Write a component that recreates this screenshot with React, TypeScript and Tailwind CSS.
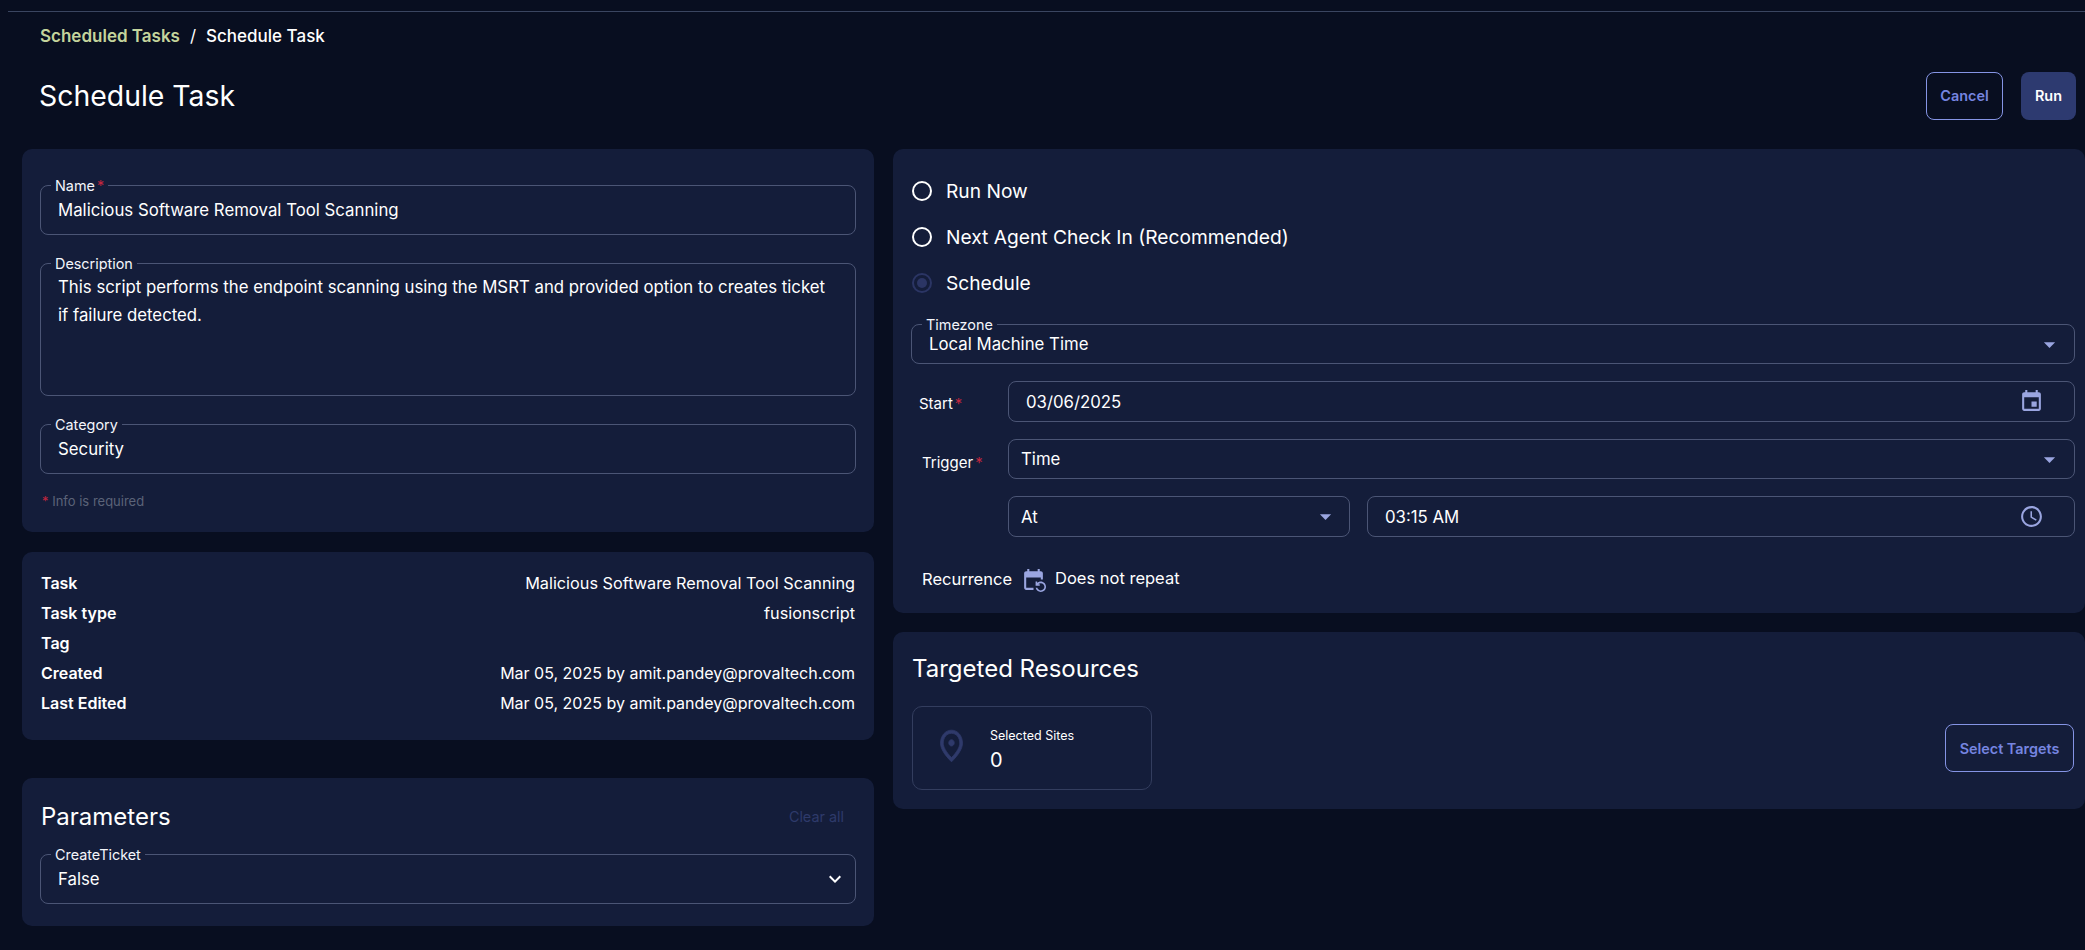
import React from "react";

const Req = () => <span className="text-[#c2263f] ml-[2px]">*</span>;

function Field({ label, req, h, children }: { label: string; req?: boolean; h: string; children: React.ReactNode }) {
  return (
    <div className={`relative rounded-[8px] border border-[#4b5575] ${h}`}>
      <span className="absolute left-[10px] -top-[10px] bg-[#141d3a] px-[4px] text-[14.4px] leading-[20px] text-[#f3f5fa]">
        {label}
        {req && <Req />}
      </span>
      {children}
    </div>
  );
}

const Arrow = () => (
  <svg className="-mr-[1px]" width="27" height="27" viewBox="0 0 24 24" fill="#9aa5e0"><path d="M7 10l5 5 5-5z" /></svg>
);

function Row({ k, v, large }: { k: string; v?: string; large?: boolean }) {
  return (
    <div className="flex h-[30px] items-center justify-between text-[16px] text-white">
      <span className="font-semibold text-white">{k}</span>
      <span className={large ? "text-[16.25px]" : "text-[16px]"}>{v}</span>
    </div>
  );
}

function Radio({ label, on }: { label: string; on?: boolean }) {
  return (
    <div className="flex h-[46px] items-center gap-[14px] pl-[1px] text-[19.2px] text-white">
      {on ? (
        <span className="flex h-[20px] w-[20px] items-center justify-center rounded-full border-2 border-[#2b3564]">
          <span className="h-[10px] w-[10px] rounded-full bg-[#2b3564]" />
        </span>
      ) : (
        <span className="h-[20px] w-[20px] rounded-full border-2 border-white" />
      )}
      <span>{label}</span>
    </div>
  );
}

export default function App() {
  return (
    <div className="h-[950px] w-full overflow-hidden bg-[#080e20] pt-[11px] text-white [font-family:Inter,'Noto_Sans',sans-serif]">
      <div className="ml-[8px] border-t border-[#3a4560]" />
      <div className="ml-[40px] mt-[13px] flex h-[24px] items-center text-[17px]">
        <span className="font-semibold text-[#c4d49c]">Scheduled Tasks</span>
        <span className="mx-[10px] text-white">/</span>
        <span className="font-medium text-white">Schedule Task</span>
      </div>
      <div className="mt-[23px] flex h-[48px] items-center justify-between pl-[39px] pr-[9px]">
        <h1 className="text-[28.4px] font-normal text-white">Schedule Task</h1>
        <div className="flex gap-[18px]">
          <button className="h-[48px] w-[77px] rounded-[8px] border border-[#8594e4] text-[14.4px] font-semibold text-[#7685e0]">Cancel</button>
          <button className="h-[48px] w-[55px] rounded-[8px] bg-[#2d3a70] text-[14.4px] font-semibold text-white">Run</button>
        </div>
      </div>

      <div className="mt-[29px] flex items-start gap-[19px] pl-[22px]">
        <div className="flex w-[852px] flex-col">
          <div className="h-[383px] rounded-[10px] bg-[#141d3a] px-[18px] pt-[36px]">
            <Field label="Name" req h="h-[50px]">
              <div className="flex h-full items-center px-[17px] pt-[1px] text-[16.8px]">Malicious Software Removal Tool Scanning</div>
            </Field>
            <div className="mt-[28px]">
              <Field label="Description" h="h-[133px]">
                <div className="pl-[17px] pr-[24px] pt-[10px] text-[16.8px] leading-[27.5px]">
                  This script performs the endpoint scanning using the MSRT and provided option to creates ticket if failure detected.
                </div>
              </Field>
            </div>
            <div className="mt-[28px]">
              <Field label="Category" h="h-[50px]">
                <div className="flex h-full items-center px-[17px] pt-[1px] text-[16.8px]">Security</div>
              </Field>
            </div>
            <div className="mt-[18px] pl-[2px] text-[13px] leading-[18px] text-[#5b6378]">
              <span className="text-[#c2263f]">*</span> Info is required
            </div>
          </div>

          <div className="mt-[20px] h-[188px] rounded-[10px] bg-[#141d3a] px-[19px] pt-[16px]">
            <Row k="Task" v="Malicious Software Removal Tool Scanning" large />
            <Row k="Task type" v="fusionscript" large />
            <Row k="Tag" />
            <Row k="Created" v="Mar 05, 2025 by amit.pandey@provaltech.com" />
            <Row k="Last Edited" v="Mar 05, 2025 by amit.pandey@provaltech.com" />
          </div>

          <div className="mt-[38px] h-[148px] rounded-[10px] bg-[#141d3a] px-[18px] pt-[22px]">
            <div className="flex h-[34px] items-center justify-between pl-[1px] pr-[12px]">
              <h2 className="text-[24px] font-normal text-white">Parameters</h2>
              <span className="text-[14.4px] text-[#2e3a6a]">Clear all</span>
            </div>
            <div className="mt-[20px]">
              <Field label="CreateTicket" h="h-[50px]">
                <div className="flex h-full items-center justify-between pl-[17px] pr-[8px] text-[16.8px]">
                  <span className="pt-[2px]">False</span>
                  <svg width="24" height="24" viewBox="0 0 24 24" fill="#fff"><path d="M16.59 8.59 12 13.17 7.41 8.59 6 10l6 6 6-6z" /></svg>
                </div>
              </Field>
            </div>
          </div>
        </div>

        <div className="flex flex-1 flex-col">
          <div className="h-[464px] rounded-[10px] bg-[#141d3a] pl-[18px] pr-[10px] pt-[19px]">
            <Radio label="Run Now" />
            <Radio label="Next Agent Check In (Recommended)" />
            <Radio label="Schedule" on />
            <div className="mt-[18px]">
              <Field label="Timezone" h="h-[40px]">
                <div className="flex h-full items-center justify-between pl-[17px] pr-[12px] text-[16.8px]">
                  <span className="pt-[2px]">Local Machine Time</span>
                  <Arrow />
                </div>
              </Field>
            </div>

            <div className="mt-[17px] flex">
              <div className="w-[97px] shrink-0 pl-[8px] pt-[13px] text-[15px] leading-[20px]">Start<Req /></div>
              <div className="flex h-[41px] flex-1 items-center justify-between rounded-[8px] border border-[#4b5575] pl-[17px] pr-[30px] text-[16.8px]">
                <span className="pt-[2px]">03/06/2025</span>
                <svg width="25" height="25" viewBox="0 0 24 24" fill="#9aa5e0"><path d="M17 12h-5v5h5v-5zM16 1v2H8V1H6v2H5c-1.11 0-1.99.9-1.99 2L3 19c0 1.1.89 2 2 2h14c1.1 0 2-.9 2-2V5c0-1.1-.9-2-2-2h-1V1h-2zm3 18H5V8h14v11z" /></svg>
              </div>
            </div>

            <div className="mt-[17px] flex">
              <div className="w-[97px] shrink-0 pl-[11px] pt-[14px] text-[15px] leading-[20px]">Trigger<Req /></div>
              <div className="flex h-[40px] flex-1 items-center justify-between rounded-[8px] border border-[#4b5575] pl-[12px] pr-[12px] text-[16.8px]">
                <span className="pt-[2px]">Time</span>
                <Arrow />
              </div>
            </div>

            <div className="ml-[97px] mt-[17px] flex gap-[17px]">
              <div className="flex h-[41px] w-[342px] items-center justify-between rounded-[8px] border border-[#4b5575] pl-[12px] pr-[11px] text-[16.8px]">
                <span className="pt-[2px]">At</span>
                <Arrow />
              </div>
              <div className="flex h-[41px] flex-1 items-center justify-between rounded-[8px] border border-[#4b5575] pl-[17px] pr-[30px] text-[16.8px]">
                <span className="pt-[2px]">03:15 AM</span>
                <svg width="25" height="25" viewBox="0 0 24 24" fill="#9aa5e0"><path d="M11.99 2C6.47 2 2 6.48 2 12s4.47 10 9.99 10C17.52 22 22 17.52 22 12S17.52 2 11.99 2zM12 20c-4.42 0-8-3.58-8-8s3.58-8 8-8 8 3.58 8 8-3.58 8-8 8zm.5-13H11v6l5.25 3.15.75-1.23-4.5-2.67z" /></svg>
              </div>
            </div>

            <div className="ml-[11px] mt-[29px] flex h-[26px] items-center text-[16.5px]">
              <span className="w-[99px]">Recurrence</span>
              <svg width="25" height="25" viewBox="0 0 24 24" fill="#9aa5e0"><path d="M21 12V6c0-1.1-.9-2-2-2h-1V2h-2v2H8V2H6v2H5c-1.1 0-2 .9-2 2v14c0 1.1.9 2 2 2h7v-2H5V10h14v2h2zm-5.36 8c.43 1.45 1.77 2.5 3.36 2.5 1.93 0 3.5-1.57 3.5-3.5s-1.57-3.5-3.5-3.5c-.95 0-1.82.38-2.45 1H18V18h-4v-4h1.5v1.43c.9-.88 2.14-1.43 3.5-1.43 2.76 0 5 2.24 5 5s-2.24 5-5 5c-2.42 0-4.44-1.72-4.9-4h1.54z" /></svg>
              <span className="ml-[9px] -mt-[1px]">Does not repeat</span>
            </div>
          </div>

          <div className="mt-[19px] flex h-[177px] items-start justify-between rounded-[10px] bg-[#141d3a] pl-[19px] pr-[11px]">
            <div>
              <h2 className="mt-[20px] h-[34px] text-[24px] font-normal leading-[34px] text-white">Targeted Resources</h2>
              <div className="mt-[20px] flex h-[84px] w-[240px] items-center rounded-[10px] border border-[#333d5e] pl-[22px]">
                <svg className="-mt-[4px]" width="33" height="38" viewBox="0 0 24 24" preserveAspectRatio="none" fill="#2f3a6b" stroke="#2f3a6b" strokeWidth="0.5"><path d="M12 12c-1.1 0-2-.9-2-2s.9-2 2-2 2 .9 2 2-.9 2-2 2zm6-1.8C18 6.57 15.35 4 12 4s-6 2.57-6 6.2c0 2.34 1.95 5.44 6 9.14 4.05-3.7 6-6.8 6-9.14zM12 2c4.2 0 8 3.22 8 8.2 0 3.32-2.67 7.25-8 11.8-5.33-4.55-8-8.48-8-11.8C4 5.22 7.8 2 12 2z" /></svg>
                <div className="ml-[22px] flex flex-col pt-[5px]">
                  <span className="text-[12.5px] leading-[16px]">Selected Sites</span>
                  <span className="mt-[2px] text-[20px] leading-[28px] text-white">0</span>
                </div>
              </div>
            </div>
            <button className="mt-[92px] h-[48px] w-[129px] rounded-[8px] border border-[#8594e4] pt-[1px] text-[14.4px] font-semibold text-[#7685e0]">Select Targets</button>
          </div>
        </div>
      </div>
    </div>
  );
}
